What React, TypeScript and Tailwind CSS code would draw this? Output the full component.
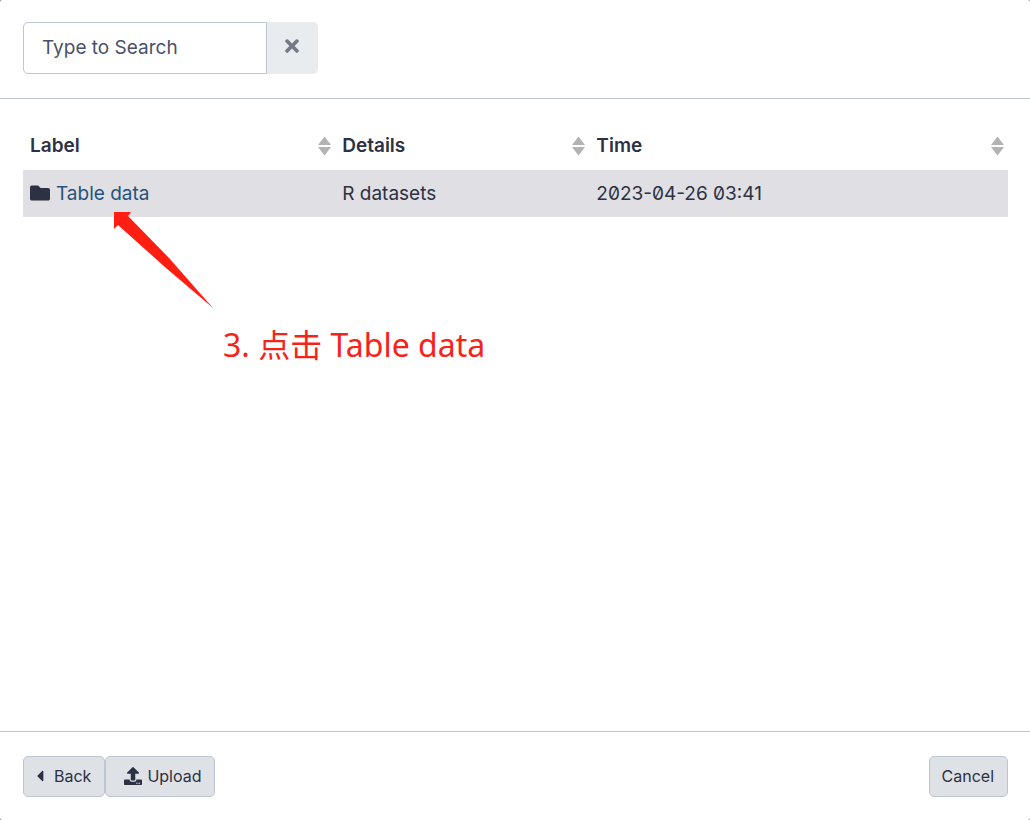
import { FaCaretLeft, FaFolder, FaTimes, FaUpload } from "react-icons/fa";

const columns = [
  { name: "Label", width: "w-[31.7%]" },
  { name: "Details", width: "w-[25.8%]" },
  { name: "Time", width: "w-[42.5%]" },
];

const rows = [{ label: "Table data", details: "R datasets", time: "2023-04-26 03:41" }];

const footerButton =
  "flex h-[41px] items-center rounded-[5px] border border-[#bdc6d0] bg-[#dee2e6] pr-[13px] pb-[2px] text-base text-[#2c3143]";

function SortIcon() {
  return (
    <svg width="13" height="20" viewBox="0 0 13 20" fill="#b3b3b3" aria-hidden="true">
      <path d="M6.5 0.5 13 9H0Z" />
      <path d="M0 11h13L6.5 19.5Z" />
    </svg>
  );
}

function Annotation() {
  return (
    <div className="pointer-events-none absolute top-[212px] left-[114px] text-[#f5231a]">
      <svg width="99" height="96" viewBox="0 0 99 96" fill="#ff1f12" aria-hidden="true">
        <path d="M0 0H17L14 4 55 46 99 96 52 56 4 13 0 17Z" />
      </svg>
      <p className="mt-[15px] ml-[109px] font-['Noto_Sans','Noto_Sans_CJK_SC',sans-serif] text-[32px] leading-[44px] whitespace-nowrap">
        3. 点击 Table data
      </p>
    </div>
  );
}

export default function App() {
  return (
    <div className="min-h-screen bg-neutral-500">
      <div className="relative flex min-h-screen flex-col rounded-[2px] bg-white font-['Inter',sans-serif] text-[19px] leading-[30px] text-[#2c3143]">
        <header className="border-b border-[#bdc6d0] px-[23px] pt-[22px] pb-6">
          <div className="flex h-[52px] w-[295px]">
            <input
              type="text"
              aria-label="Type to Search"
              placeholder="Type to Search"
              className="min-w-0 flex-1 rounded-l-[5px] border border-[#bdc6d0] bg-white px-[18px] placeholder:text-[#495069] outline-none"
            />
            <button
              type="button"
              aria-label="Clear search"
              className="flex w-[51px] items-center justify-center rounded-r-[5px] bg-[#e9ecef] pr-[2px] pb-[5px] text-[#757a89]"
            >
              <FaTimes size={20} />
            </button>
          </div>
        </header>

        <main className="flex-1 pt-[22px] pr-[22px] pl-[23px]">
          <table className="w-full table-fixed text-left">
            <thead>
              <tr className="h-[49px]">
                {columns.map((column) => (
                  <th key={column.name} scope="col" className={`${column.width} pr-1 pl-[7px] font-semibold`}>
                    <button type="button" className="flex w-full items-center justify-between">
                      {column.name}
                      <SortIcon />
                    </button>
                  </th>
                ))}
              </tr>
            </thead>
            <tbody>
              {rows.map((row) => (
                <tr key={row.label} className="h-[47px] bg-[#e0dfe4]">
                  <td className="px-[7px]">
                    <div className="flex items-center gap-[6px]">
                      <FaFolder size={20} className="mb-[2px]" />
                      <a href="#table-data" className="text-[#25537b]">
                        {row.label}
                      </a>
                    </div>
                  </td>
                  <td className="px-[7px]">{row.details}</td>
                  <td className="px-[7px] slashed-zero">{row.time}</td>
                </tr>
              ))}
            </tbody>
          </table>
        </main>

        <footer className="flex justify-between border-t border-[#bdc6d0] pt-6 pr-[22px] pb-[23px] pl-[23px]">
          <div className="flex">
            <button type="button" className={`${footerButton} gap-[10px] pl-3`}>
              <FaCaretLeft className="h-[18px] w-2" />
              Back
            </button>
            <button type="button" className={`${footerButton} gap-[5px] pl-[18px]`}>
              <FaUpload size={18} />
              Upload
            </button>
          </div>
          <button type="button" className={`${footerButton} pl-3`}>
            Cancel
          </button>
        </footer>

        <Annotation />
      </div>
    </div>
  );
}
